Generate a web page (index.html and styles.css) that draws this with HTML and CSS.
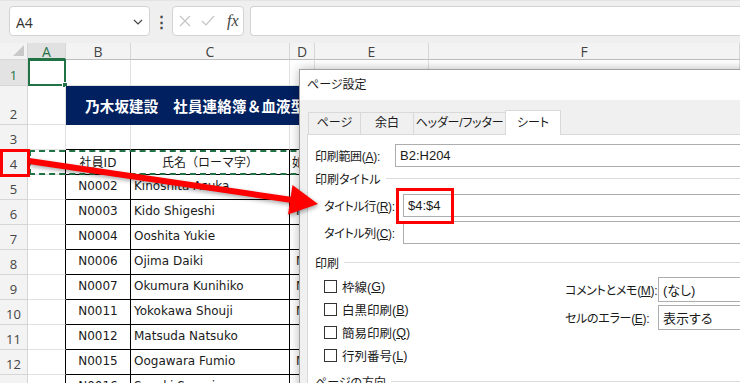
FILE: index.html
```html
<!DOCTYPE html>
<html lang="ja">
<head>
    <meta charset="UTF-8">
    <title>ページ設定 - 印刷タイトル</title>
    <link rel="stylesheet" href="styles.css">
</head>
<body>
<div class="app">
    <div class="formula-bar">
        <div class="name-box">
            <span>A4</span>
            <svg class="chevron" width="10" height="6" viewBox="0 0 10 6"><path d="M1 1l4 4 4-4" fill="none" stroke="#444" stroke-width="1.2"/></svg>
        </div>
        <div class="dots">⋮</div>
        <div class="fx-box">
            <svg width="12" height="12" viewBox="0 0 12 12"><path d="M1 1l10 10M11 1L1 11" stroke="#c4c4c4" stroke-width="1.2"/></svg>
            <svg width="14" height="12" viewBox="0 0 14 12"><path d="M1 6l4 4 8-9" fill="none" stroke="#c4c4c4" stroke-width="1.2"/></svg>
            <span class="fx">fx</span>
        </div>
        <div class="formula-input"></div>
    </div>

    <div class="sheet">
        <div class="row heads">
            <div class="rh corner"><span class="tri"></span></div>
            <div class="ca active">A</div>
            <div class="cb">B</div>
            <div class="cc">C</div>
            <div class="cd">D</div>
            <div class="ce">E</div>
            <div class="cf">F</div>
        </div>
        <div class="row r1">
            <div class="rh active">1</div>
            <div class="ca selected"><span class="handle"></span></div>
            <div class="cb"></div>
            <div class="cc"></div>
            <div class="cd"></div>
            <div class="ce"></div>
            <div class="cf"></div>
        </div>
        <div class="row r2">
            <div class="rh">2</div>
            <div class="ca"></div>
            <div class="band">乃木坂建設　社員連絡簿＆血液型一覧表</div>
        </div>
        <div class="row">
            <div class="rh">3</div>
            <div class="ca"></div>
            <div class="cb top"></div>
            <div class="cc top"></div>
            <div class="cd top"></div>
            <div class="ce"></div>
            <div class="cf"></div>
        </div>
        <div class="row r4">
            <div class="rh">4</div>
            <div class="ca tl"></div>
            <div class="cb tb center">社員ID</div>
            <div class="cc tb center">氏名（ローマ字）</div>
            <div class="cd tb head-d">如</div>
            <div class="ce tb"></div>
            <div class="cf"></div>
            <div class="marquee"></div>
        </div>
        <div class="row">
            <div class="rh">5</div>
            <div class="ca tl"></div>
            <div class="cb tb center">N0002</div>
            <div class="cc tb">Kinoshita Asuka</div>
            <div class="cd tb"></div>
            <div class="ce tb"></div>
            <div class="cf"></div>
        </div>
        <div class="row">
            <div class="rh">6</div>
            <div class="ca tl"></div>
            <div class="cb tb center">N0003</div>
            <div class="cc tb">Kido Shigeshi</div>
            <div class="cd tb sex">M</div>
            <div class="ce tb"></div>
            <div class="cf"></div>
        </div>
        <div class="row">
            <div class="rh">7</div>
            <div class="ca tl"></div>
            <div class="cb tb center">N0004</div>
            <div class="cc tb">Ooshita Yukie</div>
            <div class="cd tb"></div>
            <div class="ce tb"></div>
            <div class="cf"></div>
        </div>
        <div class="row">
            <div class="rh">8</div>
            <div class="ca tl"></div>
            <div class="cb tb center">N0006</div>
            <div class="cc tb">Ojima Daiki</div>
            <div class="cd tb sex">M</div>
            <div class="ce tb"></div>
            <div class="cf"></div>
        </div>
        <div class="row">
            <div class="rh">9</div>
            <div class="ca tl"></div>
            <div class="cb tb center">N0007</div>
            <div class="cc tb">Okumura Kunihiko</div>
            <div class="cd tb sex">M</div>
            <div class="ce tb"></div>
            <div class="cf"></div>
        </div>
        <div class="row">
            <div class="rh">10</div>
            <div class="ca tl"></div>
            <div class="cb tb center">N0011</div>
            <div class="cc tb">Yokokawa Shouji</div>
            <div class="cd tb sex">M</div>
            <div class="ce tb"></div>
            <div class="cf"></div>
        </div>
        <div class="row">
            <div class="rh">11</div>
            <div class="ca tl"></div>
            <div class="cb tb center">N0012</div>
            <div class="cc tb">Matsuda Natsuko</div>
            <div class="cd tb"></div>
            <div class="ce tb"></div>
            <div class="cf"></div>
        </div>
        <div class="row">
            <div class="rh">12</div>
            <div class="ca tl"></div>
            <div class="cb tb center">N0015</div>
            <div class="cc tb">Oogawara Fumio</div>
            <div class="cd tb sex">M</div>
            <div class="ce tb"></div>
            <div class="cf"></div>
        </div>
        <div class="row">
            <div class="rh">13</div>
            <div class="ca tl"></div>
            <div class="cb tb center">N0016</div>
            <div class="cc tb">Suzuki Sayuri</div>
            <div class="cd tb"></div>
            <div class="ce tb"></div>
            <div class="cf"></div>
        </div>
    </div>

    <div class="dialog">
        <div class="dlg-title">ページ設定</div>
        <div class="tabs">
            <div class="tab">ページ</div>
            <div class="tab">余白</div>
            <div class="tab">ヘッダー/フッター</div>
            <div class="tab current">シート</div>
        </div>
        <div class="panel">
            <div class="field range">
                <label>印刷範囲(<u>A</u>):</label>
                <div class="input">B2:H204</div>
            </div>
            <div class="legend"><span>印刷タイトル</span><i></i></div>
            <div class="field indent first">
                <label>タイトル行(<u>R</u>):</label>
                <div class="input">$4:$4</div>
            </div>
            <div class="field indent">
                <label>タイトル列(<u>C</u>):</label>
                <div class="input"></div>
            </div>
            <div class="legend print"><span>印刷</span><i></i></div>
            <div class="print-opts">
                <div class="checks">
                    <div class="check"><span class="box"></span>枠線(<u>G</u>)</div>
                    <div class="check"><span class="box"></span>白黒印刷(<u>B</u>)</div>
                    <div class="check"><span class="box"></span>簡易印刷(<u>Q</u>)</div>
                    <div class="check"><span class="box"></span>行列番号(<u>L</u>)</div>
                </div>
                <div class="selects">
                    <div class="select-row">
                        <label>コメントとメモ(<u>M</u>):</label>
                        <div class="select">(なし)</div>
                    </div>
                    <div class="select-row">
                        <label>セルのエラー(<u>E</u>):</label>
                        <div class="select">表示する</div>
                    </div>
                </div>
            </div>
            <div class="legend orient"><span>ページの方向</span><i></i></div>
        </div>
    </div>

    <div class="callout row-mark"></div>
    <div class="callout field-mark"></div>
    <svg class="arrow" width="740" height="383" viewBox="0 0 740 383">
        <line x1="29" y1="161" x2="292" y2="200" stroke="#ff0000" stroke-width="6"/>
        <polygon points="292.5,185 318,204 288,214.6" fill="#ff0000"/>
    </svg>
</div>
</body>
</html>
```

FILE: styles.css
```css
* {
    box-sizing: border-box;
}
body {
    margin: 0;
    background: #fff;
    font-family: 'Noto Sans', 'Noto Sans CJK JP', sans-serif;
    color: #222;
}
.app {
    position: relative;
    width: 740px;
    height: 383px;
    overflow: hidden;
}

/* formula bar */
.formula-bar {
    display: flex;
    align-items: flex-start;
    height: 43px;
    padding: 5px 0 0 9px;
    background: #efefef;
    border-top: 1px solid #e4e4e4;
}
.name-box, .fx-box, .formula-input {
    height: 30px;
    background: #fff;
    border: 1px solid #d3d3d3;
    border-radius: 4px;
}
.name-box {
    width: 141px;
    display: flex;
    align-items: center;
    justify-content: space-between;
    padding: 2px 6px 0 6px;
    font-family: 'Open Sans', sans-serif;
    font-size: 14px;
    color: #333;
}
.dots {
    width: 22px;
    text-align: center;
    line-height: 30px;
    font-size: 15px;
    font-weight: bold;
    color: #444;
}
.fx-box {
    width: 72px;
    display: flex;
    align-items: center;
    gap: 10px;
    padding-left: 6px;
}
.fx {
    font-family: 'Liberation Serif', serif;
    font-style: italic;
    font-size: 16px;
    color: #444;
    margin-left: 2px;
}
.formula-input {
    flex: 1;
    margin-left: 6px;
    border-right: none;
    border-radius: 4px 0 0 4px;
}

/* sheet grid */
.row {
    position: relative;
    display: flex;
    height: 25px;
    font-family: 'DejaVu Sans', 'Noto Sans CJK JP', sans-serif;
    font-size: 12px;
}
.row > div {
    border-right: 1px solid #e1e1e1;
    border-bottom: 1px solid #e1e1e1;
    display: flex;
    align-items: center;
    white-space: nowrap;
    overflow: hidden;
}
.rh { width: 28px; }
.ca { width: 38px; }
.cb { width: 65px; }
.cc { width: 159px; padding-left: 3px; }
.cd { width: 25px; padding-left: 6px; }
.ce { width: 114px; }
.cf { flex: 1; }

.row > .rh {
    background: #f3f3f3;
    border-color: #d6d6d6;
    justify-content: center;
    align-items: flex-end;
    padding-bottom: 1px;
    font-family: 'Open Sans', sans-serif;
    font-size: 13px;
    color: #444;
}
.row > .rh.active {
    background: #e3e3e3;
    color: #217346;
}
.heads {
    height: 17px;
}
.heads > div {
    background: #f3f3f3;
    border-color: #d6d6d6;
    border-bottom-color: #bdbdbd;
    justify-content: center;
    font-family: 'Open Sans', sans-serif;
    font-size: 14px;
    line-height: 15px;
    color: #444;
}
.heads > .cc, .heads > .cd {
    padding: 0;
}
.heads > .active {
    background: #e1e1e1;
    color: #217346;
    border-bottom: 2px solid #217346;
    padding-top: 1px;
}
.corner {
    position: relative;
}
.tri {
    position: absolute;
    right: 3px;
    bottom: 3px;
    width: 0;
    height: 0;
    border-left: 11px solid transparent;
    border-bottom: 11px solid #c9c9c9;
}
.r1 { height: 26px; }
.row > .selected {
    position: relative;
    overflow: visible;
    border: 2px solid #217346;
    margin-top: -1px;
}
.handle {
    position: absolute;
    right: -4px;
    bottom: -4px;
    width: 6px;
    height: 6px;
    background: #217346;
    border: 1px solid #fff;
}
.r2 { height: 39px; }
.row > .band {
    flex: 1;
    background: #002060;
    border-color: #002060;
    padding-left: 19px;
    color: #fff;
    font-family: 'Noto Sans CJK JP', sans-serif;
    font-weight: bold;
    font-size: 14.5px;
    letter-spacing: 0.2px;
}
.row > .top {
    border-bottom-color: #000;
}
.row > .tl {
    border-right-color: #000;
}
.row > .tb {
    border-right-color: #000;
    border-bottom-color: #000;
    color: #1a1a1a;
    padding-bottom: 2px;
}
.row > .center {
    justify-content: center;
    padding-left: 0;
}
.row > .head-d {
    padding-left: 2px;
}
.sex {
    color: #7a4a14;
}
.marquee {
    position: absolute;
    left: 29px;
    top: 0;
    width: 720px;
    height: 25px;
    border: 2px dashed #217346 !important;
    pointer-events: none;
}

/* page setup dialog */
.dialog {
    position: absolute;
    left: 299px;
    top: 69px;
    width: 470px;
    height: 330px;
    background: #f0f0f0;
    border: 1px solid #a0a0a0;
    box-shadow: 0 0 10px rgba(0, 0, 0, 0.28);
    font-family: 'Liberation Sans', 'Noto Sans CJK JP', sans-serif;
    font-feature-settings: "palt";
    font-size: 12px;
    color: #1a1a1a;
}
.dialog label {
    white-space: nowrap;
    flex-shrink: 0;
    letter-spacing: -0.3px;
}
.dlg-title {
    height: 30px;
    line-height: 30px;
    padding-left: 7px;
    background: #fff;
}
.tabs {
    display: flex;
    align-items: flex-end;
    height: 34px;
    padding: 0 0 0 8px;
}
.tab {
    height: 22px;
    line-height: 21px;
    text-align: center;
    white-space: nowrap;
    border: 1px solid #d9d9d9;
    border-bottom: none;
    margin-right: -1px;
}
.tab:nth-child(1) { width: 53px; }
.tab:nth-child(2) { width: 54px; }
.tab:nth-child(3) { width: 93px; letter-spacing: -0.2px; }
.tab.current {
    width: 56px;
    height: 25px;
    line-height: 25px;
    background: #fff;
    position: relative;
    margin-bottom: -1px;
}
.panel {
    margin-left: 7px;
    height: 260px;
    background: #fff;
    border-top: 1px solid #d9d9d9;
    border-left: 1px solid #d9d9d9;
    padding: 9px 0 0 7px;
}
.field {
    display: flex;
    align-items: center;
    height: 23px;
}
.field label {
    width: 80px;
}
.field.indent {
    padding-left: 9px;
    margin-top: 4px;
}
.field.indent label {
    width: 79px;
}
.field.first {
    margin-top: 9px;
}
.input, .select {
    flex: 1;
    height: 100%;
    border: 1px solid #adadad;
    border-right: none;
    padding-left: 4px;
    display: flex;
    align-items: center;
    font-size: 13px;
}
.legend {
    display: flex;
    align-items: center;
    height: 14px;
    margin-top: 4px;
}
.legend i {
    flex: 1;
    margin-left: 5px;
    border-top: 1px solid #dcdcdc;
}
.legend.print {
    margin-top: 11px;
}
.legend.orient {
    margin-top: 7px;
}
.print-opts {
    display: flex;
    margin-top: 6px;
}
.checks {
    width: 250px;
    padding-left: 9px;
}
.check {
    display: flex;
    align-items: center;
    height: 23px;
    font-size: 12.5px;
}
.box {
    width: 13px;
    height: 13px;
    border: 1px solid #333;
    margin-right: 5px;
}
.selects {
    flex: 1;
    padding-top: 2px;
}
.select-row {
    display: flex;
    align-items: center;
    height: 25px;
    margin-bottom: 3px;
}
.select-row label {
    width: 93px;
}

/* annotations */
.callout {
    position: absolute;
    border: 3px solid #ff0000;
}
.row-mark {
    left: 0;
    top: 149px;
    width: 30px;
    height: 28px;
}
.field-mark {
    left: 396px;
    top: 188px;
    width: 58px;
    height: 36px;
}
.arrow {
    position: absolute;
    left: 0;
    top: 0;
    filter: drop-shadow(1px 2px 2px rgba(0, 0, 0, 0.35));
}
```
